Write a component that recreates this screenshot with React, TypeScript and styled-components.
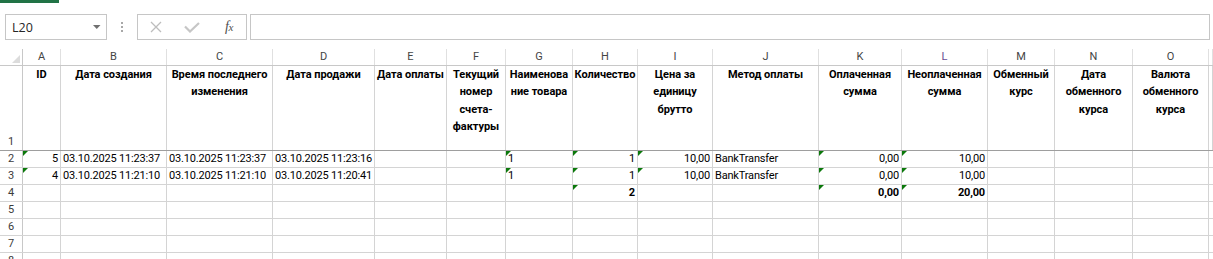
import React from 'react';
import styled, { createGlobalStyle } from 'styled-components';

const GlobalStyle = createGlobalStyle`
  html, body { margin: 0; padding: 0; background: #ffffff; }
  body {
    font-family: Roboto, "Noto Sans", "Liberation Sans", sans-serif;
    overflow: hidden;
  }
  * { box-sizing: border-box; }
`;

const COLS = [23, 38, 106, 106, 102, 72, 59, 67, 65, 75, 106, 83, 86, 67, 78, 76];
const gridCols = COLS.map((w) => `${w}px`).join(' ') + ' 1fr';
const LETTERS = ['A', 'B', 'C', 'D', 'E', 'F', 'G', 'H', 'I', 'J', 'K', 'L', 'M', 'N', 'O', ''];

const Page = styled.div`
  width: 1213px;
  height: 259px;
  overflow: hidden;
  display: flex;
  flex-direction: column;
  background: #ffffff;
`;

const Ribbon = styled.div`
  height: 3px;
  display: flex;
`;

const TabUnderline = styled.div`
  width: 59px;
  height: 3px;
  background: #217346;
`;

const FormulaBar = styled.div`
  display: flex;
  align-items: stretch;
  height: 26px;
  margin: 11px 3px 9px 5px;
  flex-shrink: 0;
`;

const NameBox = styled.div`
  width: 102px;
  border: 1px solid #c6c6c6;
  display: flex;
  align-items: center;
  justify-content: space-between;
  padding: 0 5px 0 6px;
  font-family: "Open Sans", "Noto Sans", sans-serif;
  font-size: 12.5px;
  color: #262626;
`;

const Grip = styled.div`
  width: 30px;
  display: flex;
  flex-direction: column;
  align-items: center;
  justify-content: center;
  gap: 2px;
`;

const GripDot = styled.span`
  width: 2px;
  height: 2px;
  background: #a8a8a8;
`;

const FxBox = styled.div`
  width: 110px;
  border: 1px solid #c6c6c6;
  display: flex;
  align-items: center;
`;

const IconSlot = styled.div`
  width: 36px;
  height: 100%;
  display: flex;
  align-items: center;
  justify-content: center;
`;

const FxLabel = styled.span`
  font-family: "Liberation Serif", "DejaVu Serif", serif;
  font-style: italic;
  font-size: 14px;
  color: #4f4f4f;
  letter-spacing: -0.5px;
  margin-left: 2px;
  & > small {
    font-size: 11px;
  }
`;

const FormulaInput = styled.div`
  flex: 1;
  margin-left: 3px;
  border: 1px solid #c6c6c6;
  background: #ffffff;
`;

const Sheet = styled.div`
  display: flex;
  flex-direction: column;
`;

const Row = styled.div<{ $h: number; $line: string }>`
  display: grid;
  grid-template-columns: ${gridCols};
  height: ${(p) => p.$h}px;
  flex-shrink: 0;
  border-bottom: 1px solid ${(p) => p.$line};
`;

const Corner = styled.div`
  border-right: 1px solid #c8c8c8;
  display: flex;
  align-items: flex-end;
  justify-content: flex-end;
  padding: 0 2px 2px 0;
`;

const CornerMark = styled.span`
  width: 0;
  height: 0;
  border-bottom: 8px solid #dcdcdc;
  border-left: 8px solid transparent;
`;

const ColHead = styled.div<{ $active?: boolean }>`
  border-right: 1px solid #e0e0e0;
  text-align: center;
  font-size: 11px;
  line-height: 16px;
  color: ${(p) => (p.$active ? '#6a4c93' : '#444444')};
  overflow: hidden;
`;

const RowHead = styled.div`
  border-right: 1px solid #c8c8c8;
  display: flex;
  align-items: flex-end;
  justify-content: center;
  font-size: 11px;
  line-height: 16px;
  color: #3c3c3c;
  overflow: hidden;
`;

const TitleCell = styled.div`
  border-right: 1px solid #d4d4d4;
  text-align: center;
  font-weight: 700;
  font-size: 11px;
  line-height: 17.4px;
  letter-spacing: -0.05px;
  color: #000000;
  white-space: nowrap;
`;

const TitleLine = styled.span`
  display: block;
`;

const Cell = styled.div<{ $align: 'left' | 'right'; $bold?: boolean; $tri?: boolean }>`
  position: relative;
  border-right: 1px solid #d4d4d4;
  padding: 0 2px;
  text-align: ${(p) => p.$align};
  font-weight: ${(p) => (p.$bold ? 700 : 400)};
  font-size: 11px;
  line-height: 16px;
  letter-spacing: -0.18px;
  color: #000000;
  white-space: nowrap;
  overflow: hidden;
  &::before {
    content: '';
    display: ${(p) => (p.$tri ? 'block' : 'none')};
    position: absolute;
    top: 0;
    left: 0;
    width: 0;
    height: 0;
    border-top: 5px solid #0b780b;
    border-right: 5px solid transparent;
  }
`;

type CellData = { v?: string; r?: boolean; b?: boolean; t?: boolean };

const TITLES: string[][] = [
  ['ID'],
  ['Дата создания'],
  ['Время последнего', 'изменения'],
  ['Дата продажи'],
  ['Дата оплаты'],
  ['Текущий', 'номер', 'счета-', 'фактуры'],
  ['Наименова', 'ние товара'],
  ['Количество'],
  ['Цена за', 'единицу', 'брутто'],
  ['Метод оплаты'],
  ['Оплаченная', 'сумма'],
  ['Неоплаченная', 'сумма'],
  ['Обменный', 'курс'],
  ['Дата', 'обменного', 'курса'],
  ['Валюта', 'обменного', 'курса'],
  [],
];

const E: CellData = {};

const DATA: CellData[][] = [
  [
    { v: '5', r: true, t: true },
    { v: '03.10.2025 11:23:37' },
    { v: '03.10.2025 11:23:37' },
    { v: '03.10.2025 11:23:16' },
    E,
    E,
    { v: '1', t: true },
    { v: '1', r: true, t: true },
    { v: '10,00', r: true, t: true },
    { v: 'BankTransfer' },
    { v: '0,00', r: true, t: true },
    { v: '10,00', r: true, t: true },
    E,
    E,
    E,
    E,
  ],
  [
    { v: '4', r: true, t: true },
    { v: '03.10.2025 11:21:10' },
    { v: '03.10.2025 11:21:10' },
    { v: '03.10.2025 11:20:41' },
    E,
    E,
    { v: '1', t: true },
    { v: '1', r: true, t: true },
    { v: '10,00', r: true, t: true },
    { v: 'BankTransfer' },
    { v: '0,00', r: true, t: true },
    { v: '10,00', r: true, t: true },
    E,
    E,
    E,
    E,
  ],
  [
    E,
    E,
    E,
    E,
    E,
    E,
    E,
    { v: '2', r: true, b: true, t: true },
    E,
    E,
    { v: '0,00', r: true, b: true, t: true },
    { v: '20,00', r: true, b: true, t: true },
    E,
    E,
    E,
    E,
  ],
];

const EMPTY_ROW: CellData[] = Array.from({ length: 16 }, () => E);

const DropArrow = () => (
  <svg width="8" height="4" viewBox="0 0 8 4">
    <path d="M0 0 L7.5 0 L3.75 4 Z" fill="#707070" />
  </svg>
);

const CancelIcon = () => (
  <svg width="12" height="12" viewBox="0 0 12 12">
    <path d="M1 1 L11 11 M11 1 L1 11" stroke="#bdbdbd" strokeWidth="1.3" fill="none" />
  </svg>
);

const EnterIcon = () => (
  <svg width="16" height="11" viewBox="0 0 16 11">
    <path d="M1 4.5 L6 9.5 L15 1" stroke="#c6c6c6" strokeWidth="2.2" fill="none" />
  </svg>
);

const DataRow = ({ n, cells }: { n: number; cells: CellData[] }) => (
  <Row $h={17} $line="#d4d4d4">
    <RowHead>{n}</RowHead>
    {cells.map((c, i) => (
      <Cell key={i} $align={c.r ? 'right' : 'left'} $bold={c.b} $tri={c.t}>
        {c.v}
      </Cell>
    ))}
  </Row>
);

export default function App() {
  return (
    <Page>
      <GlobalStyle />
      <Ribbon>
        <TabUnderline />
      </Ribbon>
      <FormulaBar>
        <NameBox>
          <span>L20</span>
          <DropArrow />
        </NameBox>
        <Grip>
          <GripDot />
          <GripDot />
          <GripDot />
        </Grip>
        <FxBox>
          <IconSlot>
            <CancelIcon />
          </IconSlot>
          <IconSlot>
            <EnterIcon />
          </IconSlot>
          <IconSlot>
            <FxLabel>
              f<small>x</small>
            </FxLabel>
          </IconSlot>
        </FxBox>
        <FormulaInput />
      </FormulaBar>
      <Sheet>
        <Row $h={17} $line="#c8c8c8">
          <Corner>
            <CornerMark />
          </Corner>
          {LETTERS.map((l, i) => (
            <ColHead key={i} $active={l === 'L'}>
              {l}
            </ColHead>
          ))}
        </Row>
        <Row $h={85} $line="#9e9e9e">
          <RowHead>1</RowHead>
          {TITLES.map((lines, i) => (
            <TitleCell key={i}>
              {lines.map((ln, j) => (
                <TitleLine key={j}>{ln}</TitleLine>
              ))}
            </TitleCell>
          ))}
        </Row>
        {DATA.map((cells, i) => (
          <DataRow key={i} n={i + 2} cells={cells} />
        ))}
        {[5, 6, 7, 8].map((n) => (
          <DataRow key={n} n={n} cells={EMPTY_ROW} />
        ))}
      </Sheet>
    </Page>
  );
}
